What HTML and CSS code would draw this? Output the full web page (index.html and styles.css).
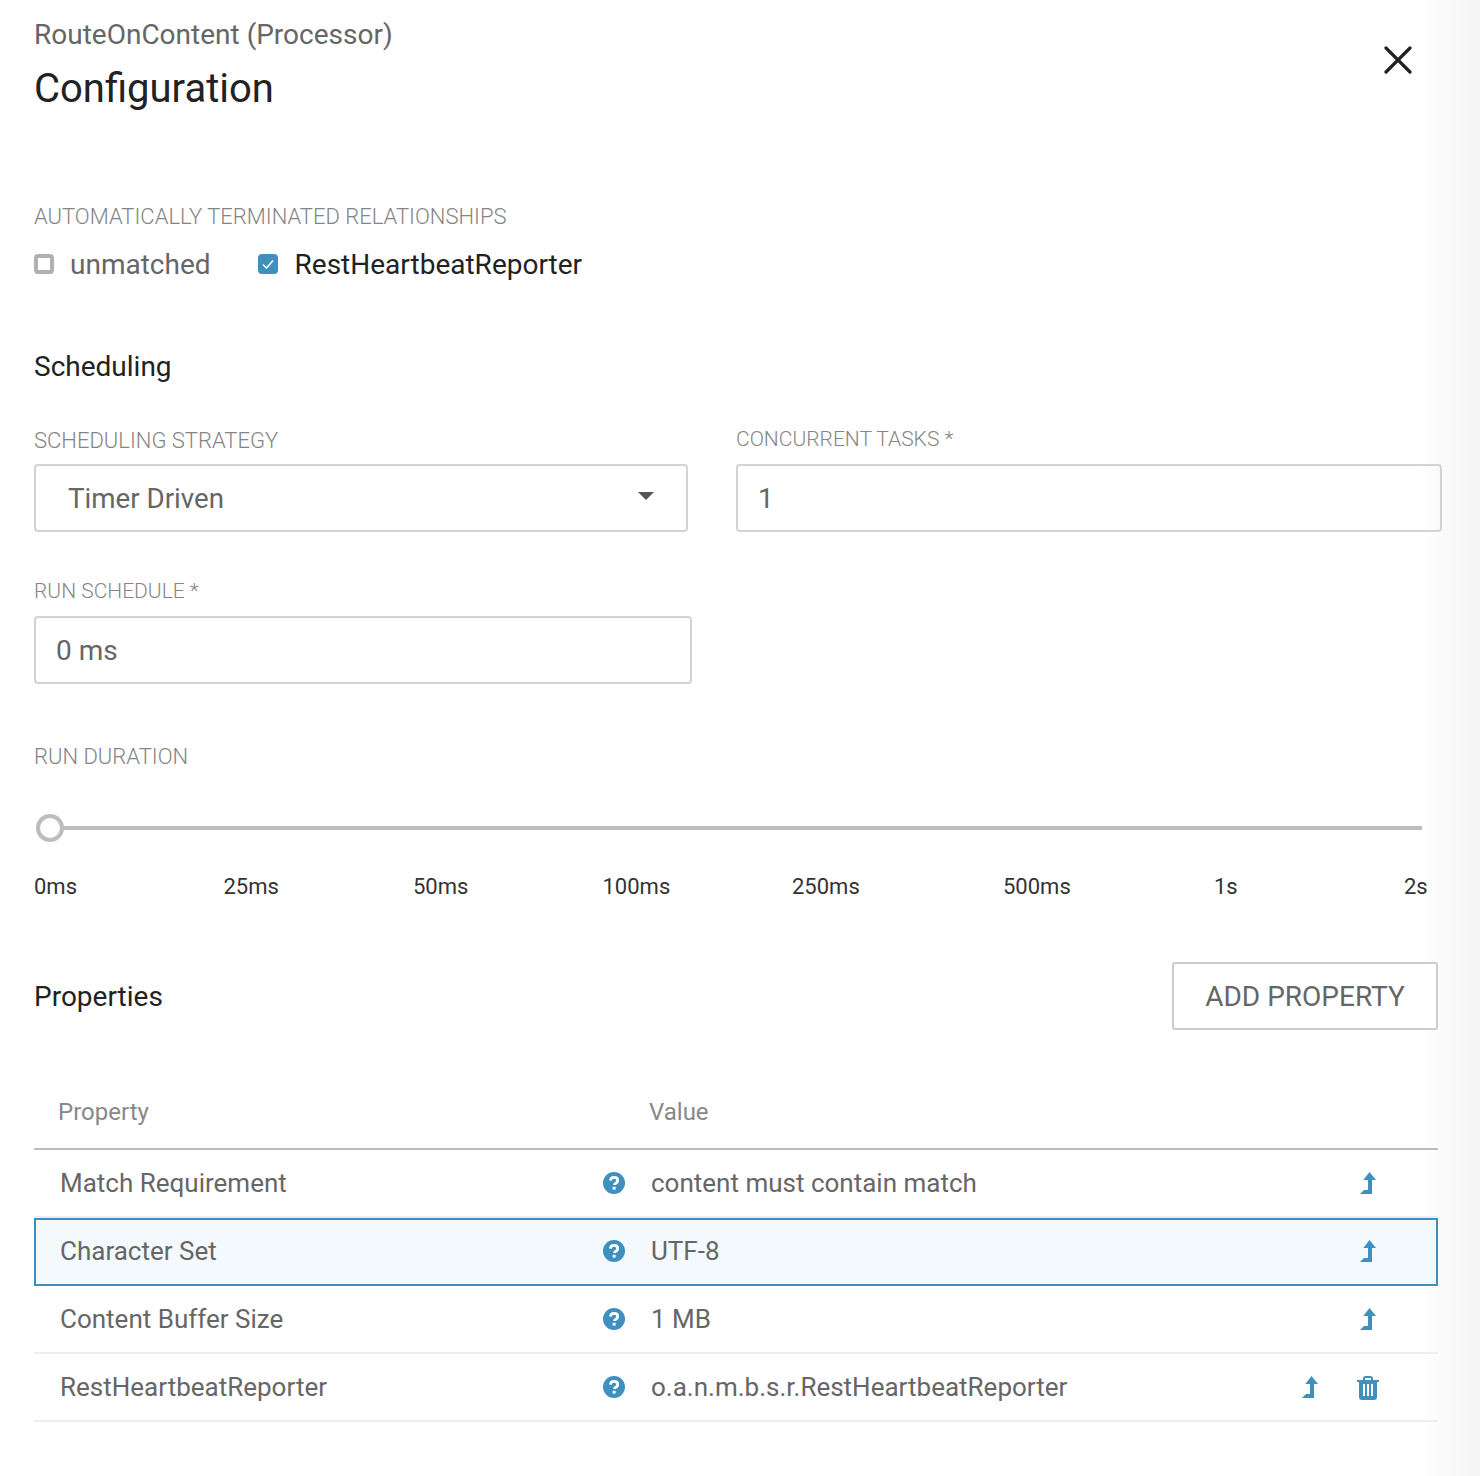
FILE: index.html
```html
<!DOCTYPE html>
<html lang="en">
<head>
<meta charset="utf-8">
<title>Configuration</title>
<link rel="stylesheet" href="styles.css">
</head>
<body>
<svg class="defs" width="0" height="0" aria-hidden="true">
  <symbol id="help" viewBox="0 0 22 22"><circle cx="11" cy="11" r="11" fill="#3f8fbf"/><path d="M7.400 8.600c.2-2 1.700-3.200 3.700-3.200s3.600 1.200 3.600 3c0 1.500-.9 2.200-1.900 2.900-.8.500-1.200.9-1.200 1.800" fill="none" stroke="#fff" stroke-width="2.800"/><rect x="9.700" y="14.800" width="2.900" height="2.800" fill="#fff"/></symbol>
  <symbol id="edit" viewBox="0 0 16 22"><path d="M9.500 0 16 8h-4v14H0l4-4h4V8H3.300z" fill="#3f8fbf"/></symbol>
</svg>
<main class="page">
  <header class="head">
    <div>
      <div class="crumb">RouteOnContent (Processor)</div>
      <h1>Configuration</h1>
    </div>
    <svg class="close" width="28" height="28" viewBox="0 0 28 28"><path d="M2 2 26 26M26 2 2 26" stroke="#222" stroke-width="3.200" stroke-linecap="round"/></svg>
  </header>

  <section class="rel">
    <div class="label">AUTOMATICALLY TERMINATED RELATIONSHIPS</div>
    <div class="checks">
      <div class="check off"><span class="box"></span>unmatched</div>
      <div class="check on"><span class="box"><svg width="14" height="12" viewBox="0 0 14 12"><path d="M2 6.500 5.500 10 12 2.500" fill="none" stroke="#fff" stroke-width="1.600"/></svg></span>RestHeartbeatReporter</div>
    </div>
  </section>

  <h2 class="sched-title">Scheduling</h2>
  <div class="sched-row">
    <div class="field strategy">
      <div class="label">SCHEDULING STRATEGY</div>
      <div class="input select"><span class="select-text">Timer Driven</span><i class="caret"></i></div>
    </div>
    <div class="field tasks">
      <div class="label req">CONCURRENT TASKS *</div>
      <div class="input">1</div>
    </div>
  </div>
  <div class="field schedule">
    <div class="label req">RUN SCHEDULE *</div>
    <div class="input">0 ms</div>
  </div>

  <div class="label duration">RUN DURATION</div>
  <div class="slider"><span class="thumb"></span></div>
  <div class="ticks"><span>0ms</span><span>25ms</span><span>50ms</span><span>100ms</span><span>250ms</span><span>500ms</span><span>1s</span><span>2s</span></div>

  <div class="prop-head">
    <h2>Properties</h2>
    <button class="add">ADD PROPERTY</button>
  </div>

  <div class="table">
    <div class="row thead"><span class="c-name">Property</span><span class="c-val">Value</span></div>
    <div class="row"><span class="c-name">Match Requirement</span><svg class="help"><use href="#help"/></svg><span class="c-val">content must contain match</span><span class="acts"><svg class="edit"><use href="#edit"/></svg></span></div>
    <div class="row sel"><span class="c-name">Character Set</span><svg class="help"><use href="#help"/></svg><span class="c-val">UTF-8</span><span class="acts"><svg class="edit"><use href="#edit"/></svg></span></div>
    <div class="row"><span class="c-name">Content Buffer Size</span><svg class="help"><use href="#help"/></svg><span class="c-val">1 MB</span><span class="acts"><svg class="edit"><use href="#edit"/></svg></span></div>
    <div class="row"><span class="c-name">RestHeartbeatReporter</span><svg class="help"><use href="#help"/></svg><span class="c-val">o.a.n.m.b.s.r.RestHeartbeatReporter</span><span class="acts"><svg class="edit"><use href="#edit"/></svg><svg class="trash" width="22" height="24" viewBox="0 0 22 24"><path d="M0 4h6V2.500C6 1 7 0 8.500 0h5C15 0 16 1 16 2.500V4h6v2H0zM8 4h6V2H8zM2 6h18v15c0 2-1 3-3 3H5c-2 0-3-1-3-3zM6 8v12h2V8zm4 0v12h2V8zm4 0v12h2V8z" fill="#3f8fbf" fill-rule="evenodd"/></svg></span></div>
  </div>
</main>
</body>
</html>
```
FILE: styles.css
```css
* { box-sizing: border-box; }
html, body { margin: 0; padding: 0; }
body {
  height: 1476px;
  overflow: hidden;
  font-family: Roboto, "Liberation Sans", sans-serif;
  color: #222;
  background: linear-gradient(to right, #fff 0, #fff 1420px, #f4f4f4 1480px);
}
.defs { position: absolute; }
.page { width: 1480px; padding: 0 42px 0 34px; }
.head { display: flex; justify-content: space-between; height: 170px; padding-top: 17px; }
.crumb { font-size: 28px; line-height: 36px; color: #666; }
h1 { margin: 0; font-size: 40px; line-height: 48px; font-weight: 400; padding-top: 12px; color: #222; }
.close { margin: 29px 26px 0 0; }
.label { font-size: 22px; line-height: 26px; font-weight: 300; color: #858585; }
.label.req { font-size: 21px; }
.rel { height: 171px; padding-top: 34px; }
.checks { display: flex; gap: 47px; margin-top: 15px; }
.check { display: flex; align-items: center; font-size: 28px; line-height: 40px; }
.check.off { color: #666; }
.box { width: 20px; height: 20px; border-radius: 4px; margin-right: 16px; display: flex; align-items: center; justify-content: center; position: relative; top: -1px; }
.on .box { margin-right: 17px; }
.off .box { border: 4px solid #b0b0b0; }
.on .box { background: #3f8fbf; }
h2 { margin: 0; font-size: 28px; font-weight: 400; line-height: 36px; color: #222; }
.sched-title { height: 85px; padding-top: 8px; }
.sched-row { display: flex; gap: 48px; height: 152px; }
.field .label { margin-bottom: 12px; }
.strategy { width: 654px; flex: none; padding-top: 2px; }
.tasks { width: 706px; flex: none; }
.strategy .label { margin-bottom: 10px; }
.input { height: 68px; border: 2px solid #d0d4d8; border-radius: 4px; font-size: 28px; line-height: 66px; color: #666; padding-left: 20px; }
.select { display: flex; justify-content: space-between; align-items: center; padding: 0 32px; font-size: 27.700px; }
.select-text { margin-top: 2px; }
.caret { border: 8px solid transparent; border-top: 8px solid #555; border-bottom: 0; margin-bottom: 4px; }
.schedule { width: 658px; height: 166px; }
.duration { height: 26px; }
.slider { height: 4px; margin: 56px 16px 0 14px; background: #bdbdbd; position: relative; }
.thumb { position: absolute; left: -12px; top: -12px; width: 28px; height: 28px; border: 4px solid #bdbdbd; border-radius: 50%; background: #fff; }
.ticks { display: grid; grid-template-columns: 189.500px 189.500px 189.500px 189.500px 211px 211px 190px auto; margin-top: 44px; font-size: 22px; line-height: 26px; color: #333; }
.prop-head { display: flex; justify-content: space-between; align-items: center; height: 68px; margin-top: 62px; }
.prop-head h2 { padding-top: 1px; }
.add { width: 266px; height: 68px; background: #fff; border: 2px solid #ccc; border-radius: 3px; font: 400 28px Roboto, sans-serif; color: #666; }
.table { margin-top: 50px; }
.row { display: flex; align-items: center; height: 68px; border-bottom: 2px solid #eee; font-size: 26px; color: #666; padding-left: 26px; }
.thead { height: 70px; border-bottom: 2px solid #bbb; color: #888; font-size: 24px; padding-left: 24px; padding-bottom: 4px; }
.thead .c-name { width: 591px; }
.c-name { width: 543px; flex: none; }
.help { width: 22px; height: 22px; margin-right: 26px; flex: none; }
.c-val { flex: 1; }
.acts { display: flex; align-items: center; justify-content: flex-end; gap: 36px; padding-right: 59px; }
.edit { width: 16px; height: 22px; margin-right: 3px; }
.trash { position: relative; top: 1px; }
.sel { background: #f3f9fd; border: 2px solid #3f8fbf; padding-left: 24px; padding-bottom: 2px; }
.sel .acts { padding-right: 57px; }
```
